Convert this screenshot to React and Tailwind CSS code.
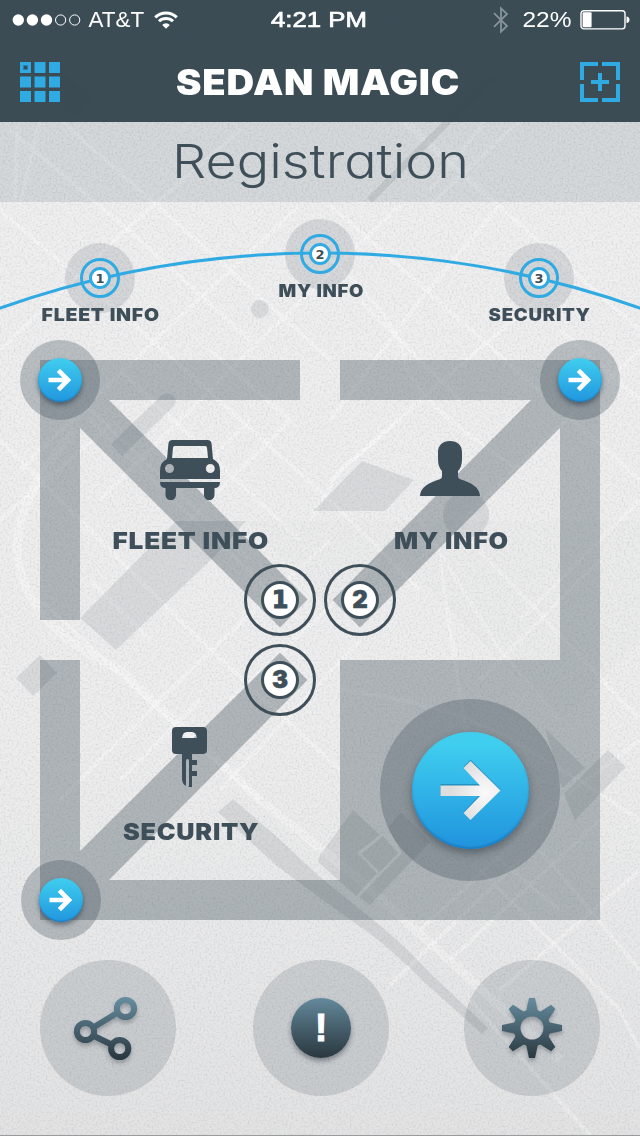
import React, { useLayoutEffect, useRef, useState } from "react";

/* Text stretched horizontally so that it fills an exact width. */
function FitText({ width, className, children }) {
  const ref = useRef(null);
  const [scale, setScale] = useState(1);
  useLayoutEffect(() => {
    setScale(width / ref.current.offsetWidth);
  }, [width]);
  return (
    <span className="flex justify-center" style={{ width }}>
      <span
        ref={ref}
        className={`inline-block shrink-0 whitespace-nowrap ${className}`}
        style={{ transform: `scaleX(${scale})` }}
      >
        {children}
      </span>
    </span>
  );
}

const streets = [
  "M0 210L140 330L330 500L420 590", "M10 130L140 240L250 340", "M60 120L230 270L330 360", "M300 205L150 345L20 470",
  "M240 130L120 235L0 350", "M400 205L250 350L100 500", "M330 205L640 480", "M400 120L640 330", "M520 120L430 205",
  "M500 205L420 300L330 420", "M640 350L420 560", "M0 440L200 640L340 770", "M40 600L170 720L260 800", "M0 520L110 425",
  "M80 400L250 560", "M120 370L300 540", "M330 540L180 680L60 800", "M380 560L230 700", "M300 620L90 420", "M250 420L170 500",
  "M210 350L290 420L180 530", "M420 520L500 650L560 720", "M470 540L640 720", "M600 560L480 680", "M440 560L470 760",
  "M340 690Q420 700 470 720T640 820", "M520 620L640 500", "M360 640L220 790", "M150 640L90 580", "M200 700L120 780",
  "M400 420L340 470L310 520", "M460 400L360 300", "M420 930L560 800L640 740", "M450 960L600 820", "M500 990L640 870",
  "M540 850L640 970", "M480 870L620 1010L640 1050", "M470 1000L590 1135", "M560 910L500 860L430 800", "M520 860L390 985",
  "M130 30L230 110", "M300 20L480 190", "M560 30L430 190", "M20 60L15 200", "M40 120L20 205", "M260 60L180 130",
  "M330 260Q400 320 405 360T520 470", "M560 330L640 400", "M330 480L420 400L560 280",
];

function MapBackdrop() {
  return (
    <svg className="absolute inset-0" width="640" height="1136" viewBox="0 0 640 1136" fill="none">
      <defs>
        <linearGradient id="paper" x1="0" y1="0" x2="0" y2="1">
          <stop offset="0" stopColor="#f0f0f1" />
          <stop offset=".65" stopColor="#eeeeef" />
          <stop offset="1" stopColor="#e3e3e4" />
        </linearGradient>
        <filter id="grain" x="0" y="0" width="100%" height="100%">
          <feTurbulence type="fractalNoise" baseFrequency=".5" numOctaves="3" seed="4" />
          <feColorMatrix values="0 0 0 0 .35  0 0 0 0 .37  0 0 0 0 .38  1.4 .8 0 0 -.98" />
        </filter>
      </defs>
      <rect width="640" height="1136" fill="url(#paper)" />
      <g stroke="#fff" strokeOpacity=".32" strokeWidth="4">
        {streets.map((d) => <path key={d} d={d} />)}
      </g>
      <path d="M75 430Q5 510 20 570T120 670L260 800L360 880L560 1060" stroke="#fff" strokeOpacity=".3" strokeWidth="9" />
      <g fill="#3c4d57" fillOpacity=".13">
        <path d="M62 70L93 98L76 117L45 90Z" />
        <path d="M367 198L490 74L495 79L372 203Z" />
        <circle cx="260" cy="309" r="9" />
        <path d="M111 444L162 395Q169 391 174 396Q178 401 173 407L122 456Z" />
        <path d="M176 521H246L215 556L116 650L80 618Z" />
        <path d="M362 461L414 480L385 511H313Z" />
        <circle cx="466" cy="515" r="23" />
        <path d="M40 655L57 673L33 696L16 678Z" />
        <path d="M233 799L276 836L320 877L362 911Q400 940 430 973L488 1028L482 1034L423 981Q393 950 362 928L320 898L277 866L218 812Z" />
        <path d="M320 855L353 810L380 835L357 853L377 873L356 896L318 862Z" />
        <path d="M383 836L398 853L380 872L361 854Z" />
        <path d="M388 828L401 812L430 842L370 905L359 897L402 853Z" />
        <path d="M545 728L585 768L562 788Z" />
        <path d="M608 750L626 767L575 820L564 794Z" />
      </g>
      <path d="M246 521H640V640L560 720L400 560L340 620Z" fill="#3c4d57" fillOpacity=".015" />
      <rect width="640" height="1136" filter="url(#grain)" opacity=".4" />
      <path d="M0 1135.5H640" stroke="#999b9c" />
    </svg>
  );
}

function StatusBar() {
  return (
    <div className="flex h-10 items-center px-[11px] text-white font-['Liberation_Sans',sans-serif] text-[22px] leading-10">
      <svg width="72" height="14" viewBox="0 0 72 14" className="shrink-0">
        {[0, 1, 2, 3, 4].map((i) => (
          <circle key={i} cx={7.3 + i * 14.1} cy="7" r={i < 3 ? 5.7 : 5.1} fill={i < 3 ? "#fff" : "none"} stroke="#fff" strokeWidth={i < 3 ? 0 : 1} />
        ))}
      </svg>
      <div className="ml-[5px]"><FitText width={56} className="">AT&amp;T</FitText></div>
      <svg width="24" height="18" viewBox="0 0 24 18" className="ml-[10px] shrink-0" fill="none" stroke="#fff" strokeWidth="3">
        <path d="M1.2 6.3A15.500 15.500 0 0 1 22.800 6.300" />
        <path d="M5 10.300A10 10 0 0 1 19 10.300" />
        <path d="M8.200 13.900A5.400 5.400 0 0 1 15.800 13.900L12 17.800Z" fill="#fff" stroke="none" />
      </svg>
      <div className="ml-[93px]"><FitText width={96} className="[-webkit-text-stroke:0.7px_white]">4:21 PM</FitText></div>
      <svg width="16" height="28" viewBox="0 0 16 28" className="ml-[126px] shrink-0" fill="none" stroke="#86939a" strokeWidth="1.8">
        <path d="M1 7.200L14 20L8 25.700V2.300L14 8L1 20.800" />
      </svg>
      <div className="ml-[14px]"><FitText width={49} className="">22%</FitText></div>
      <svg width="50" height="20" viewBox="0 0 50 20" className="ml-[8px] shrink-0" fill="none" stroke="#fff">
        <rect x="1" y=".7" width="44" height="18.200" rx="2.800" strokeWidth="1.400" />
        <rect x="2.600" y="2.300" width="9" height="15" rx="1" fill="#fff" stroke="none" />
        <path d="M46.500 6.500Q49.500 6.800 49.500 9.800T46.500 13Z" fill="#fff" stroke="none" />
      </svg>
    </div>
  );
}

function NavBar() {
  return (
    <div className="flex h-[82px] items-center justify-between px-5 pt-[2px]">
      <svg width="40" height="40" viewBox="0 0 40 40" fill="#30aae3">
        {[0, 14.5, 29].map((y) => [0, 14.5, 29].map((x) => <rect key={x + "-" + y} x={x} y={y} width="11" height="11" />))}
        <rect x="3.500" y="3.500" width="4" height="4" fill="#3a4b55" stroke="#2783ad" strokeWidth="1" />
      </svg>
      <h1 className="pr-[3px] leading-[40px]">
        <FitText width={284} className="font-['Inter',sans-serif] text-[35px] font-black tracking-[0.02em] text-white">SEDAN MAGIC</FitText>
      </h1>
      <svg width="40" height="40" viewBox="0 0 40 40" fill="none" stroke="#30aae3" strokeWidth="4">
        <path d="M18 2H2V18M22 2H38V18M18 38H2V22M22 38H38V22M11 20H29M20 11V29" />
      </svg>
    </div>
  );
}

function Step({ n, label, width, className }) {
  return (
    <div className={`flex w-[120px] flex-col items-center ${className}`}>
      <div className="flex size-[70px] items-center justify-center rounded-full">
        <div className="flex size-10 items-center justify-center rounded-full border-[3px] border-[#30aae3]">
          <div className="flex size-[22px] items-center justify-center rounded-full border-[3px] border-[#30aae3] bg-white font-['DejaVu_Sans',sans-serif] text-[13px] leading-none font-bold text-[#3e4f59]">{n}</div>
        </div>
      </div>
      <div className="-mt-[10px] ml-[2px] leading-6">
        <FitText width={width} className="font-['Inter',sans-serif] text-[17px] font-black tracking-[0.04em] text-[#3e4f59]">{label}</FitText>
      </div>
    </div>
  );
}

function Steps() {
  return (
    <section className="relative flex h-[158px] justify-between px-10">
      <svg className="absolute inset-0" width="640" height="158" viewBox="0 0 640 158" fill="none">
        <g fill="#3c4d57" fillOpacity=".15">
          <circle cx="100" cy="76" r="35" />
          <circle cx="320" cy="52" r="35" />
          <circle cx="539" cy="76" r="35" />
        </g>
        <path d="M-1 106.500A958 958 0 0 1 641 106.500" stroke="#30aae3" strokeWidth="3" />
      </svg>
      <Step n="1" label="FLEET INFO" width={118} className="relative pt-[41px]" />
      <Step n="2" label="MY INFO" width={86} className="relative pt-[17px]" />
      <Step n="3" label="SECURITY" width={102} className="relative right-px pt-[41px]" />
    </section>
  );
}

function CornerButton({ className }) {
  return (
    <button className={`absolute flex size-20 items-center justify-center rounded-full bg-[#3c4d57]/30 ${className}`}>
      <span className="flex size-11 items-center justify-center rounded-full bg-linear-to-b from-[#40ceef] to-[#2296de] shadow-[0_3px_5px_rgba(20,35,50,0.5),inset_0_-1px_1px_rgba(20,100,170,0.6)]">
        <svg width="44" height="44" viewBox="-22 -22 44 44" fill="none" stroke="#fff" strokeWidth="4.600">
          <path d="M-11.500 0H6M-1.600-9.600L8 0L-1.600 9.600" />
        </svg>
      </span>
    </button>
  );
}

function NumberNode({ n, font, className }) {
  return (
    <div className={`absolute flex size-[72px] items-center justify-center rounded-full border-[3px] border-[#3e4f59] ${className}`}>
      <div className={`flex size-[38px] items-center justify-center rounded-full border-[3px] border-[#3e4f59] bg-white text-[24px] leading-none text-[#3e4f59] ${font}`}>{n}</div>
    </div>
  );
}

function CarIcon() {
  return (
    <svg width="60" height="60" viewBox="0 0 60 60" fill="#3e4f59">
      <path fillRule="evenodd" d="M12.500 0H47.500Q51.200 0 51.600 4L53 19Q60 22 60 31V39H0V31Q0 22 7 19L8.400 4Q8.800 0 12.500 0ZM14.500 6Q13.200 6 13 7.500L12 18H48L47 7.500Q46.800 6 45.500 6ZM9.500 24A4.500 4.500 0 1 0 9.500 33A4.500 4.500 0 1 0 9.500 24ZM50.300 24A4.500 4.500 0 1 0 50.300 33A4.500 4.500 0 1 0 50.300 24Z" />
      <path d="M0 42H60Q60 48 54.500 48V55A5.200 5.200 0 0 1 44 55V48H16V55A5.200 5.200 0 0 1 5.500 55V48Q0 48 0 42Z" />
    </svg>
  );
}

function PersonIcon() {
  return (
    <svg width="60" height="60" viewBox="0 0 60 60" fill="#3e4f59">
      <path d="M30 1C37.500 1 42 5.500 42 12V19Q42 27 38 31V36Q38 38.500 41 39.500C51 42.500 59.800 47.500 60 56H0C.2 47.500 9 42.500 19 39.500Q22 38.500 22 36V31Q18 27 18 19V12C18 5.500 22.500 1 30 1Z" />
    </svg>
  );
}

function KeyIcon() {
  return (
    <svg width="60" height="60" viewBox="0 0 60 60" fill="#3e4f59">
      <path fillRule="evenodd" d="M16 0H43Q47 0 47 4V23Q47 27 43 27H32V33H37V38H32V44H37V49H32V60H28V59.500H29V34Q29 32 27.500 32Q26 32 26 34V59Q22 57 22 52V27H16Q12 27 12 23V4Q12 0 16 0ZM22 11H37Q36 5 32 5H27Q22.500 5 22 11Z" />
    </svg>
  );
}

function Tile({ icon, label, width, className }) {
  return (
    <div className={`flex flex-col items-center ${className}`}>
      {icon}
      <div className="ml-[2px] leading-8">
        <FitText width={width} className="font-['Inter',sans-serif] text-[23px] font-black tracking-[0.03em] text-[#3e4f59]">{label}</FitText>
      </div>
    </div>
  );
}

function Diagram() {
  return (
    <section className="relative grid h-[560px] grid-cols-[300px_260px] grid-rows-[300px_260px] px-10">
      <svg className="absolute inset-0" width="640" height="560" viewBox="0 360 640 560">
        <g fill="#3c4d57" opacity=".35">
          <path d="M40 360H300V400H109L307.500 599.500L280 627.500L80 428V620H40Z" />
          <path d="M340 360H600V920H40V660H80V851L280 652.500L307.500 680L109 880H340V660H560V428L360 627.500L332.500 600L531 400H340Z" />
        </g>
      </svg>
      <Tile icon={<CarIcon />} label="FLEET INFO" width={157} className="relative gap-[25px] pt-20" />
      <Tile icon={<PersonIcon />} label="MY INFO" width={115} className="relative gap-[25px] pt-20 pr-10" />
      <Tile icon={<KeyIcon />} label="SECURITY" width={136} className="relative gap-[29px] pt-[67px]" />
      <div className="relative flex items-center justify-center">
        <button className="flex h-[182px] w-[180px] items-center justify-center rounded-[50%] bg-[#3c4d57]/30">
          <span className="flex size-[117px] items-center justify-center rounded-full bg-linear-to-b from-[#40ceef] from-10% to-[#2296de] to-95% shadow-[0_4px_8px_rgba(30,40,50,0.45),inset_0_-2px_2px_rgba(20,100,170,0.5)]">
            <svg width="117" height="117" viewBox="-58.500 -58.500 117 117">
              <defs>
                <radialGradient id="arrowFill" gradientUnits="userSpaceOnUse" cx="15" cy="2" r="34">
                  <stop offset="0" stopColor="#fafafa" />
                  <stop offset="1" stopColor="#dedede" />
                </radialGradient>
              </defs>
              <path d="M-30-5.500H9L-7-22.500L0-30L30 0L0 30L-7 22.500L9 5.500H-30Z" fill="#17648f" opacity=".45" transform="translate(0 -1)" />
              <path d="M-30-5H9.500L-7-22.500L0-29.500L30 0L0 29.500L-7 22.500L9.500 5.500H-30Z" fill="url(#arrowFill)" />
            </svg>
          </span>
        </button>
      </div>
      <CornerButton className="-top-5 left-5" />
      <CornerButton className="-top-5 left-[540px]" />
      <CornerButton className="top-[500px] left-[21px]" />
      <NumberNode n="1" font="font-['DejaVu_Sans',sans-serif] font-bold [-webkit-text-stroke:1px_#3e4f59]" className="top-[204px] left-[244px]" />
      <NumberNode n="2" font="font-['Inter',sans-serif] font-black [-webkit-text-stroke:0.5px_#3e4f59]" className="top-[204px] left-[324px]" />
      <NumberNode n="3" font="font-['Inter',sans-serif] font-black [-webkit-text-stroke:0.5px_#3e4f59]" className="top-[284px] left-[244px]" />
    </section>
  );
}

const disc = "flex size-[136px] items-center justify-center rounded-full bg-[#3c4d57]/17";

function Footer() {
  return (
    <footer className="flex justify-between px-10 pt-10">
      <button className={disc}>
        <svg width="80" height="80" viewBox="68 988 80 80" fill="none" className="drop-shadow-[0_3px_2px_rgba(30,40,50,0.3)]">
          <defs>
            <linearGradient id="steel" gradientUnits="userSpaceOnUse" x1="0" y1="1000" x2="0" y2="1058">
              <stop offset="0" stopColor="#648a9c" />
              <stop offset="1" stopColor="#2a3840" />
            </linearGradient>
          </defs>
          <g stroke="url(#steel)" strokeWidth="6">
            <circle cx="125.500" cy="1008.500" r="8.600" />
            <circle cx="85.500" cy="1031.500" r="8.600" />
            <circle cx="119.700" cy="1048.500" r="8.600" />
            <path d="M94 1027L117 1013M93 1035.500L111.500 1044.500" />
          </g>
        </svg>
      </button>
      <button className={`${disc} relative left-px`}>
        <span className="flex size-[60px] items-center justify-center rounded-full bg-linear-to-b from-[#648a9c] to-[#2a3840] font-['Liberation_Sans',sans-serif] text-[38px] leading-none font-bold text-white shadow-[0_3px_5px_rgba(30,40,50,0.45)] [-webkit-text-stroke:1px_white]">!</span>
      </button>
      <button className={disc}>
        <svg width="80" height="80" viewBox="-40 -40 80 80" className="drop-shadow-[0_3px_2px_rgba(30,40,50,0.3)]">
          <defs>
            <linearGradient id="gearFill" gradientUnits="userSpaceOnUse" x1="0" y1="-28" x2="0" y2="30">
              <stop offset="0" stopColor="#648a9c" />
              <stop offset="1" stopColor="#2a3840" />
            </linearGradient>
            <mask id="gearMask">
              <g fill="#fff">
                <circle r="18.500" />
                {[0, 45, 90, 135, 180, 225, 270, 315].map((a) => (
                  <path key={a} d="M-3-30H3L5.600-18Q6.500-15 9-14H-9Q-6.500-15-5.600-18Z" transform={`rotate(${a})`} />
                ))}
              </g>
              <circle r="11.500" fill="#000" />
            </mask>
          </defs>
          <rect x="-32" y="-32" width="64" height="64" fill="url(#gearFill)" mask="url(#gearMask)" />
        </svg>
      </button>
    </footer>
  );
}

export default function App() {
  return (
    <div className="relative h-[1136px] w-[640px] overflow-hidden">
      <MapBackdrop />
      <div className="relative flex flex-col">
        <header className="h-[122px] bg-[#35464f]/97">
          <StatusBar />
          <NavBar />
        </header>
        <div className="flex h-20 items-center justify-center bg-[#3c4d57]/14 leading-[78px]">
          <FitText width={297} className="-mt-[2px] font-['Inter',sans-serif] text-[47px] font-light tracking-normal text-[#3e4f59] [font-feature-settings:'cv11']">Registration</FitText>
        </div>
        <Steps />
        <Diagram />
        <Footer />
      </div>
    </div>
  );
}
